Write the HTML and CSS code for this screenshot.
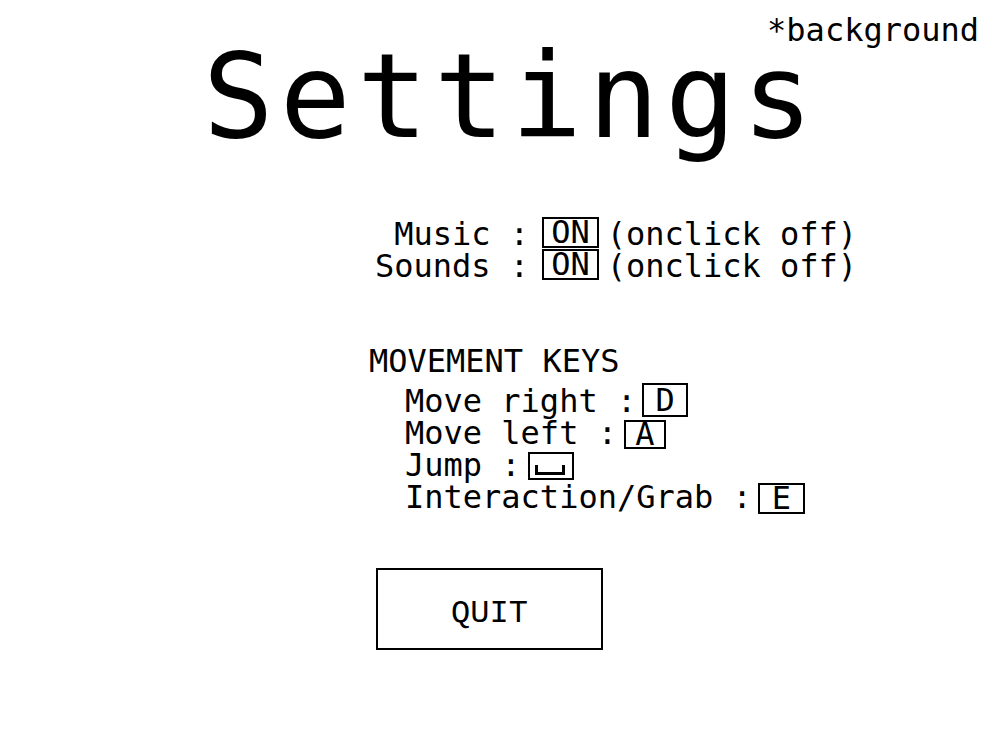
FILE: index.html
```html
<!DOCTYPE html>
<html>
<head>
<meta charset="utf-8">
<link rel="stylesheet" href="styles.css">
</head>
<body>
<div class="page">
  <div class="bg-note">*background</div>
  <h1 class="title">Settings</h1>
  <div class="content">
    <div class="audio">
      <div class="row"><span class="label">Music :</span><span class="toggle">ON</span><span class="hint">(onclick off)</span></div>
      <div class="row"><span class="label">Sounds :</span><span class="toggle">ON</span><span class="hint">(onclick off)</span></div>
    </div>
    <div class="keys">
      <div class="keys-title">MOVEMENT KEYS</div>
      <div class="key-row"><span>Move right :</span><span class="key key-d">D</span></div>
      <div class="key-row"><span>Move left :</span><span class="key key-a">A</span></div>
      <div class="key-row"><span>Jump :</span><span class="key key-space"><span class="space-glyph"></span></span></div>
      <div class="key-row"><span>Interaction/Grab :</span><span class="key key-e">E</span></div>
    </div>
    <button class="quit">QUIT</button>
  </div>
</div>
</body>
</html>
```
FILE: styles.css
```css
html, body {
  margin: 0;
  padding: 0;
  background: #fff;
  color: #000;
}
.page {
  position: relative;
  width: 1000px;
  height: 750px;
  font-family: "DejaVu Sans Mono", monospace;
  font-size: 32px;
  line-height: 32px;
}
.bg-note {
  position: absolute;
  top: 10px;
  right: 21px;
  font-size: 32px;
  line-height: 40px;
}
.title {
  margin: 0;
  padding-top: 26px;
  font-weight: normal;
  font-size: 118px;
  line-height: 140px;
  letter-spacing: 6px;
  text-align: center;
  padding-left: 22px;
}
.content {
  padding-left: 376px;
  padding-top: 52px;
}
.audio {
  display: flex;
  flex-direction: column;
  margin-left: -1px;
}
.row {
  display: flex;
  align-items: flex-start;
  height: 32px;
}
.label {
  width: 8ch;
  text-align: right;
  white-space: pre;
  margin-right: 13px;
}
.toggle {
  border: 2px solid #000;
  padding: 0 7px;
  height: 27px;
  line-height: 27px;
  margin-top: -1px;
  margin-right: 8px;
}
.keys {
  margin-top: 63px;
  margin-left: -7px;
}
.keys-title {
  margin-bottom: 8px;
  height: 32px;
}
.key-row {
  display: flex;
  align-items: flex-start;
  padding-left: 36px;
  height: 32px;
}
.key {
  margin-left: 7px;
  border: 2px solid #000;
  box-sizing: border-box;
  display: block;
  text-align: center;
}
.key-d {
  margin-left: 6px;
  width: 46px;
  height: 34px;
  margin-top: -2px;
  line-height: 30px;
}
.key-a {
  width: 42px;
  height: 29px;
  margin-top: 3px;
  line-height: 25px;
}
.key-space {
  width: 46px;
  height: 28px;
  margin-top: 3px;
  display: flex;
  justify-content: center;
  align-items: flex-start;
}
.key-e {
  margin-left: 6px;
  width: 47px;
  height: 31px;
  margin-top: 2px;
  line-height: 27px;
}
.space-glyph {
  display: block;
  box-sizing: border-box;
  width: 30px;
  height: 10px;
  border: 3px solid #000;
  border-top: none;
  margin-top: 11px;
  margin-right: 1px;
}
.quit {
  display: block;
  margin-top: 55px;
  width: 227px;
  height: 82px;
  border: 2px solid #000;
  background: #fff;
  font-family: "Liberation Mono", monospace;
  font-size: 32px;
  color: #000;
  padding: 8px 0 0 0;
}
```
